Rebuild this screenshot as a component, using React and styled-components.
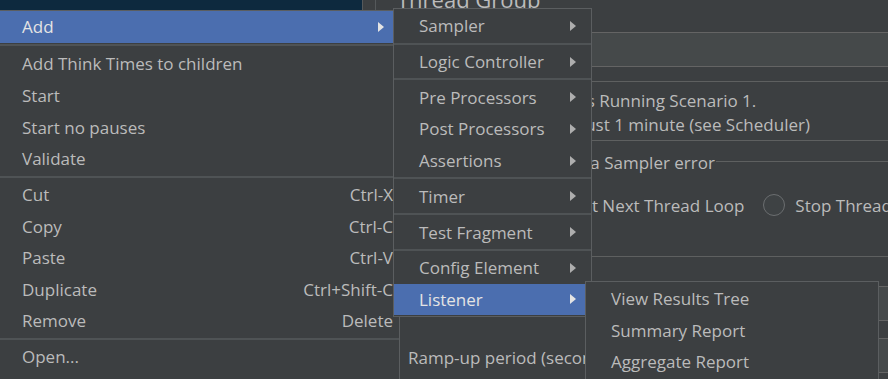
import React from "react";
import styled, { createGlobalStyle } from "styled-components";

const GlobalStyle = createGlobalStyle`
  html, body {
    margin: 0;
    padding: 0;
    background: #3c3f41;
  }
  body {
    font-family: "Open Sans", "Liberation Sans", sans-serif;
    font-size: 17px;
    color: #bbbbbb;
    overflow: hidden;
  }
`;

const Window = styled.div`
  position: relative;
  width: 888px;
  height: 379px;
  overflow: hidden;
  display: flex;
  background: #3c3f41;
`;

const TreePane = styled.div`
  width: 362px;
  flex: none;
`;

const TreeSelected = styled.div`
  height: 10px;
  background: #0d293e;
`;

const Splitter = styled.div`
  width: 12px;
  flex: none;
  border-left: 1px solid #55595b;
  border-right: 1px solid #55595b;
`;

const Editor = styled.div`
  flex: 1;
  min-width: 0;
  display: flex;
  flex-direction: column;
  padding-left: 21px;
`;

const Title = styled.div`
  margin-top: -12px;
  height: 44px;
  font-size: 22px;
  line-height: 22px;
  white-space: nowrap;
`;

const FieldRow = styled.div`
  display: flex;
  align-items: center;
  height: 35px;
  white-space: nowrap;
`;

const RowLabel = styled.span`
  width: ${(p) => p.$w}px;
  flex: none;
  padding-top: ${(p) => p.$dy || 0}px;
`;

const Field = styled.div`
  flex: 1;
  height: 100%;
  box-sizing: border-box;
  background: #45494a;
  border: 1px solid #646464;
  border-right: none;
`;

const CommentRow = styled.div`
  display: flex;
  margin-top: 14px;
  white-space: nowrap;
`;

const CommentBox = styled.div`
  flex: 1;
  height: 60px;
  box-sizing: border-box;
  border-top: 1px solid #5e6060;
  border-bottom: 1px solid #5e6060;
  padding: 7px 0 0 ${(p) => p.$indent}px;
  line-height: 24px;
  overflow: hidden;
`;

const Group = styled.div`
  margin-top: 12px;
  border-bottom: 1px solid #5e6060;
  padding-bottom: 39px;
`;

const GroupHeader = styled.div`
  display: flex;
  height: 20px;
  line-height: 20px;
  white-space: nowrap;
`;

const GroupTitle = styled.span`
  padding-left: ${(p) => p.$indent}px;
  padding-right: 1px;
`;

const Rule = styled.div`
  flex: 1;
  height: 1px;
  margin-top: 8px;
  background: #5e6060;
`;

const RadioRow = styled.div`
  display: flex;
  align-items: center;
  gap: 19px;
  height: 24px;
  margin-top: 20px;
  padding-left: ${(p) => p.$indent}px;
  white-space: nowrap;
`;

const Radio = styled.label`
  display: flex;
  align-items: center;
  gap: 10px;
  flex: none;
`;

const RadioDot = styled.span`
  width: 22px;
  height: 22px;
  box-sizing: border-box;
  border-radius: 50%;
  border: 1.5px solid #6b6e70;
  background: #3e4244;
`;

const Props = styled.div`
  display: flex;
  flex-direction: column;
  gap: 17px;
  padding: 29px 0 0 11px;
`;

const Popup = styled.div`
  position: absolute;
  left: ${(p) => p.$x}px;
  top: ${(p) => p.$y}px;
  width: ${(p) => p.$w}px;
  box-sizing: border-box;
  background: #3c3f41;
  border: 1px solid #5b5e60;
  padding-top: ${(p) => p.$pad || 0}px;
  padding-bottom: ${(p) => p.$pad || 0}px;
  z-index: ${(p) => p.$z};
`;

const Item = styled.div`
  display: flex;
  align-items: center;
  height: 31.6px;
  padding-left: ${(p) => p.$indent}px;
  padding-right: 4px;
  background: ${(p) => (p.$active ? "#4b6eaf" : "transparent")};
  color: ${(p) => (p.$active ? "#e4e4e4" : "#bbbbbb")};
  white-space: nowrap;
`;

const ItemText = styled.span`
  flex: 1;
`;

const Accel = styled.span`
  flex: none;
  margin-right: 2px;
`;

const Arrow = styled.span`
  width: 0;
  height: 0;
  margin-right: 11px;
  border-top: 5px solid transparent;
  border-bottom: 5px solid transparent;
  border-left: 6px solid ${(p) => (p.$active ? "#e4e4e4" : "#aeaeae")};
`;

const Separator = styled.div`
  height: ${(p) => p.$h || 4.2}px;
  display: flex;
  align-items: center;
  &::after {
    content: "";
    flex: 1;
    height: 2px;
    background: #4f5355;
  }
`;

const mainItems = [
  { label: "Add", sub: true, active: true },
  { sep: 5.6 },
  { label: "Add Think Times to children" },
  { label: "Start" },
  { label: "Start no pauses" },
  { label: "Validate" },
  { sep: 4.2 },
  { label: "Cut", accel: "Ctrl-X" },
  { label: "Copy", accel: "Ctrl-C" },
  { label: "Paste", accel: "Ctrl-V" },
  { label: "Duplicate", accel: "Ctrl+Shift-C" },
  { label: "Remove", accel: "Delete" },
  { sep: 4.2 },
  { label: "Open..." },
  { label: "Merge" },
];

const addItems = [
  { label: "Sampler", sub: true },
  { sep: 4.2 },
  { label: "Logic Controller", sub: true },
  { sep: 4.2 },
  { label: "Pre Processors", sub: true },
  { label: "Post Processors", sub: true },
  { label: "Assertions", sub: true },
  { sep: 4.2 },
  { label: "Timer", sub: true },
  { sep: 4.2 },
  { label: "Test Fragment", sub: true },
  { sep: 4.2 },
  { label: "Config Element", sub: true },
  { label: "Listener", sub: true, active: true },
];

const listenerItems = [
  { label: "View Results Tree" },
  { label: "Summary Report" },
  { label: "Aggregate Report" },
  { label: "Backend Listener" },
];

const Menu = ({ items, indent, ...rest }) => (
  <Popup {...rest}>
    {items.map((it, i) =>
      it.sep ? (
        <Separator key={i} $h={it.sep} />
      ) : (
        <Item key={i} $indent={indent} $active={it.active}>
          <ItemText>{it.label}</ItemText>
          {it.accel && <Accel>{it.accel}</Accel>}
          {it.sub && <Arrow $active={it.active} />}
        </Item>
      )
    )}
  </Popup>
);

export default function App() {
  return (
    <>
      <GlobalStyle />
      <Window>
        <TreePane>
          <TreeSelected />
        </TreePane>
        <Splitter />
        <Editor>
          <Title>Thread Group</Title>
          <FieldRow>
            <RowLabel $w={70}>Name:</RowLabel>
            <Field />
          </FieldRow>
          <CommentRow>
            <RowLabel $w={90}>Comments:</RowLabel>
            <CommentBox $indent={4}>
              This Group is Running Scenario 1.
              <br />
              It executes just 1 minute (see Scheduler)
            </CommentBox>
          </CommentRow>
          <Group>
            <GroupHeader>
              <GroupTitle $indent={3}>Action to be taken after a Sampler error</GroupTitle>
              <Rule />
            </GroupHeader>
            <RadioRow $indent={8}>
              <Radio>
                <RadioDot />
                Continue
              </Radio>
              <Radio>
                <RadioDot />
                Start Next Thread Loop
              </Radio>
              <Radio>
                <RadioDot />
                Stop Thread
              </Radio>
              <Radio>
                <RadioDot />
                Stop Test
              </Radio>
            </RadioRow>
          </Group>
          <Props>
            <FieldRow>
              <RowLabel $w={250} $dy={4}>Number of Threads (users):</RowLabel>
              <Field />
            </FieldRow>
            <FieldRow>
              <RowLabel $w={250} $dy={4}>Ramp-up period (seconds):</RowLabel>
              <Field />
            </FieldRow>
          </Props>
        </Editor>
        <Menu items={mainItems} indent={22} $x={-1} $y={10} $w={401} $z={1} />
        <Menu items={addItems} indent={25} $x={393} $y={8} $w={199} $z={2} $pad={1} />
        <Menu items={listenerItems} indent={25} $x={585} $y={281} $w={294} $z={3} $pad={1} />
      </Window>
    </>
  );
}
